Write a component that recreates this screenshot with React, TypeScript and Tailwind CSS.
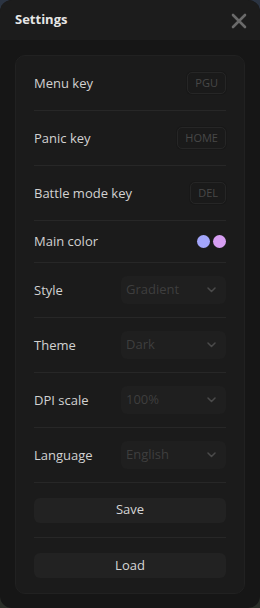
import React from "react";

const font = { fontFamily: '"Open Sans", "Noto Sans", sans-serif' };

function Row({ label, children, h = "h-[55px]", last = false }: { label: string; children: React.ReactNode; h?: string; last?: boolean }) {
  return (
    <div className={`${h} flex items-center justify-between ${last ? "" : "border-b border-[#272727]"}`}>
      <span className="text-[13px] text-[#d2d2d2] mt-[1px]">{label}</span>
      {children}
    </div>
  );
}

function KeyBadge({ k }: { k: string }) {
  return (
    <div className="h-[22px] px-[7px] rounded-[5px] border border-[#262626] bg-[#1a1a1a] flex items-center text-[11px] text-[#484848] shadow-[0_0_0_1px_#181818]">
      {k}
    </div>
  );
}

function Select({ value }: { value: string }) {
  return (
    <div className="w-[105px] h-[28px] rounded-[6px] bg-[#1f1f1f] flex items-center justify-between pl-[5px] pr-[10px]">
      <span className="text-[13px] text-[#3e3e3e]">{value}</span>
      <svg width="9" height="6" viewBox="0 0 9 6" fill="none">
        <path d="M1 1l3.5 3.5L8 1" stroke="#4a4a4a" strokeWidth="1.5" strokeLinecap="round" strokeLinejoin="round" />
      </svg>
    </div>
  );
}

function Btn({ label }: { label: string }) {
  return (
    <button className="w-full h-[25px] rounded-[6px] bg-[#222222] text-[13px] text-[#d6d6d6] flex items-center justify-center">
      {label}
    </button>
  );
}

export default function App() {
  return (
    <div className="w-[260px] h-[608px] bg-gradient-to-b from-[#2b3442] to-[#2a2e28]" style={font}>
      <div className="w-full h-full rounded-[12px] bg-[#161616] flex flex-col overflow-hidden">
        <div className="h-[40px] bg-[#1c1c1c] flex items-center justify-between pl-[15px] pr-[13px] shrink-0">
          <span className="text-[13px] font-bold text-[#e6e6e6]">Settings</span>
          <svg width="16" height="16" viewBox="0 0 16 16" className="mt-[1px]">
            <path d="M2 2L14 14M14 2L2 14" stroke="#6a6a6a" strokeWidth="2.6" strokeLinecap="round" />
          </svg>
        </div>
        <div className="px-[15px] pt-[15px]">
          <div className="rounded-[10px] bg-[#1b1b1b] border border-[#212121] px-[18px]">
            <Row label="Menu key" h="h-[55px]"><KeyBadge k="PGU" /></Row>
            <Row label="Panic key"><KeyBadge k="HOME" /></Row>
            <Row label="Battle mode key"><KeyBadge k="DEL" /></Row>
            <Row label="Main color" h="h-[42px]">
              <div className="flex gap-[3px]">
                <div className="w-[13px] h-[13px] rounded-full bg-[#a3a6fb]" />
                <div className="w-[13px] h-[13px] rounded-full bg-[#d69ef2]" />
              </div>
            </Row>
            <Row label="Style"><Select value="Gradient" /></Row>
            <Row label="Theme"><Select value="Dark" /></Row>
            <Row label="DPI scale"><Select value="100%" /></Row>
            <Row label="Language"><Select value="English" /></Row>
            <div className="h-[55px] flex items-center border-b border-[#272727]">
              <Btn label="Save" />
            </div>
            <div className="h-[55px] flex items-center">
              <Btn label="Load" />
            </div>
          </div>
        </div>
      </div>
    </div>
  );
}
